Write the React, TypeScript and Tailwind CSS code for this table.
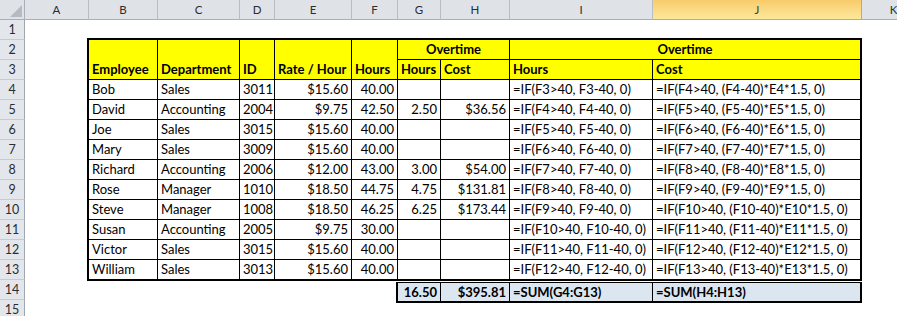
import React from "react";

const FONT = { fontFamily: "Lato, 'Open Sans', sans-serif" };

const colHeaders: { l: string; w: number }[] = [
  { l: "A", w: 64 },
  { l: "B", w: 69 },
  { l: "C", w: 82 },
  { l: "D", w: 35 },
  { l: "E", w: 77 },
  { l: "F", w: 46 },
  { l: "G", w: 43 },
  { l: "H", w: 69 },
  { l: "I", w: 143 },
  { l: "J", w: 209 },
  { l: "K", w: 64 },
];

type Row = {
  name: string;
  dept: string;
  id: string;
  rate: string;
  hours: string;
  oh: string;
  oc: string;
  n: number;
};

const rows: Row[] = [
  { name: "Bob", dept: "Sales", id: "3011", rate: "$15.60", hours: "40.00", oh: "", oc: "", n: 4 },
  { name: "David", dept: "Accounting", id: "2004", rate: "$9.75", hours: "42.50", oh: "2.50", oc: "$36.56", n: 5 },
  { name: "Joe", dept: "Sales", id: "3015", rate: "$15.60", hours: "40.00", oh: "", oc: "", n: 6 },
  { name: "Mary", dept: "Sales", id: "3009", rate: "$15.60", hours: "40.00", oh: "", oc: "", n: 7 },
  { name: "Richard", dept: "Accounting", id: "2006", rate: "$12.00", hours: "43.00", oh: "3.00", oc: "$54.00", n: 8 },
  { name: "Rose", dept: "Manager", id: "1010", rate: "$18.50", hours: "44.75", oh: "4.75", oc: "$131.81", n: 9 },
  { name: "Steve", dept: "Manager", id: "1008", rate: "$18.50", hours: "46.25", oh: "6.25", oc: "$173.44", n: 10 },
  { name: "Susan", dept: "Accounting", id: "2005", rate: "$9.75", hours: "30.00", oh: "", oc: "", n: 11 },
  { name: "Victor", dept: "Sales", id: "3015", rate: "$15.60", hours: "40.00", oh: "", oc: "", n: 12 },
  { name: "William", dept: "Sales", id: "3013", rate: "$15.60", hours: "40.00", oh: "", oc: "", n: 13 },
];

function Cell({
  children,
  right,
  last,
  noR,
  className = "",
}: {
  children?: React.ReactNode;
  right?: boolean;
  last?: boolean;
  noR?: boolean;
  className?: string;
}) {
  return (
    <div
      className={
        "flex items-end overflow-hidden whitespace-nowrap px-[3px] leading-[19px] border-black " +
        (noR ? "" : "border-r ") +
        (last ? "" : "border-b ") +
        (right ? "justify-end " : "justify-start ") +
        className
      }
    >
      {children}
    </div>
  );
}

export default function App() {
  return (
    <div
      className="w-[897px] h-[316px] overflow-hidden bg-white text-black relative"
      style={FONT}
    >
      {/* Column headers */}
      <div className="flex h-[20px]">
        <div className="w-[25px] shrink-0 h-[20px] bg-[#dfe3e8] border-r border-b border-[#a9afb7] relative overflow-hidden">
          <div className="absolute right-[2px] bottom-[2px] w-0 h-0 border-l-[12px] border-l-transparent border-b-[12px] border-b-[#b6bbc2]" />
        </div>
        {colHeaders.map((c) => {
          const sel = c.l === "J";
          return (
            <div
              key={c.l}
              style={{ width: c.w }}
              className={
                "shrink-0 h-[20px] flex items-center justify-center text-[11.5px] leading-[19px] border-r border-b " +
                (sel
                  ? "bg-gradient-to-b from-[#f8cb6c] to-[#fde89b] border-r-[#e0a24b] border-b-[#e0a24b] text-[#3a3a3a]"
                  : "bg-[#dfe3e8] border-r-[#b9bec5] border-b-[#a9afb7] text-[#2c2c2c]")
              }
            >
              {c.l}
            </div>
          );
        })}
      </div>

      <div className="flex">
        {/* Row headers */}
        <div className="w-[25px] shrink-0 flex flex-col">
          {Array.from({ length: 15 }, (_, i) => (
            <div
              key={i}
              className="h-[20px] shrink-0 bg-[#e3e7ec] border-r border-r-[#9fa6af] border-b border-b-[#c6cbd2] flex items-center justify-center text-[12.5px] leading-[19px] text-[#2c2c2c]"
            >
              {i + 1}
            </div>
          ))}
        </div>

        {/* Sheet area */}
        <div className="flex-1 pt-[18px] pl-[62px] text-[13px]">
          <div className="w-[775px] border-2 border-black grid grid-cols-[69px_82px_35px_77px_46px_43px_69px_143px_207px] grid-rows-[repeat(11,20px)_19px]">
            {/* Header rows 2-3 */}
            <Cell className="row-span-2 bg-[#ffff00] font-bold">Employee</Cell>
            <Cell className="row-span-2 bg-[#ffff00] font-bold">Department</Cell>
            <Cell className="row-span-2 bg-[#ffff00] font-bold">ID</Cell>
            <Cell className="row-span-2 bg-[#ffff00] font-bold">Rate / Hour</Cell>
            <Cell className="row-span-2 bg-[#ffff00] font-bold">Hours</Cell>
            <Cell className="col-span-2 bg-[#ffff00] font-bold justify-center">
              <span className="w-full text-center">Overtime</span>
            </Cell>
            <Cell noR className="col-span-2 bg-[#ffff00] font-bold">
              <span className="w-full text-center">Overtime</span>
            </Cell>
            <Cell className="bg-[#ffff00] font-bold">Hours</Cell>
            <Cell className="bg-[#ffff00] font-bold">Cost</Cell>
            <Cell className="bg-[#ffff00] font-bold">Hours</Cell>
            <Cell noR className="bg-[#ffff00] font-bold">Cost</Cell>

            {rows.map((r, idx) => {
              const last = idx === rows.length - 1;
              const n = r.n;
              return (
                <React.Fragment key={n}>
                  <Cell last={last}>{r.name}</Cell>
                  <Cell last={last}>{r.dept}</Cell>
                  <Cell last={last}>{r.id}</Cell>
                  <Cell last={last} right>
                    {r.rate}
                  </Cell>
                  <Cell last={last} right>
                    {r.hours}
                  </Cell>
                  <Cell last={last} right>
                    {r.oh}
                  </Cell>
                  <Cell last={last} right>
                    {r.oc}
                  </Cell>
                  <Cell last={last}>{`=IF(F${n - 1}>40, F${n - 1}-40, 0)`}</Cell>
                  <Cell last={last} noR>
                    {`=IF(F${n}>40, (F${n}-40)*E${n}*1.5, 0)`}
                  </Cell>
                </React.Fragment>
              );
            })}
          </div>

          {/* Totals row 14 */}
          <div className="ml-[309px] mt-[1px] w-[466px] h-[21px] border-2 border-t border-black bg-[#dce6f1] flex font-bold">
            <div className="w-[43px] shrink-0 border-r border-black flex items-center justify-end px-[3px] leading-[18px]">
              16.50
            </div>
            <div className="w-[69px] shrink-0 border-r border-black flex items-center justify-end px-[3px] leading-[18px]">
              $395.81
            </div>
            <div className="w-[143px] shrink-0 border-r border-black flex items-center px-[3px] leading-[18px]">
              =SUM(G4:G13)
            </div>
            <div className="flex-1 flex items-center px-[3px] leading-[18px]">
              =SUM(H4:H13)
            </div>
          </div>
        </div>
      </div>
    </div>
  );
}
